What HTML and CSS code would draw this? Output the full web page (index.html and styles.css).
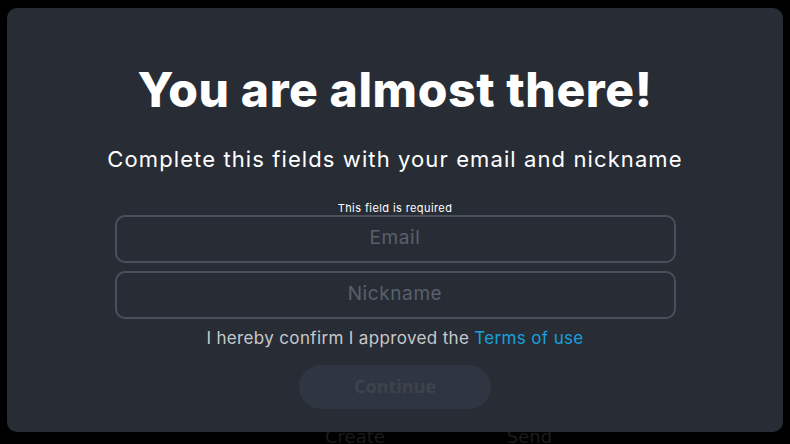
FILE: index.html
```html
<!DOCTYPE html>
<html lang="en">
<head>
<meta charset="utf-8">
<title>You are almost there!</title>
<link rel="stylesheet" href="styles.css">
</head>
<body>
<div class="page">
  <div class="page-body"></div>
  <nav class="page-nav">
    <span class="nav-item">Create</span>
    <span class="nav-item">Send</span>
  </nav>
</div>
<div class="overlay">
  <section class="modal">
    <h1 class="modal-title">You are almost there!</h1>
    <p class="modal-subtitle">Complete this fields with your email and nickname</p>
    <form class="modal-form">
      <span class="field-error">This field is required</span>
      <input class="field" type="email" placeholder="Email">
      <input class="field" type="text" placeholder="Nickname">
      <p class="terms">I hereby confirm I approved the <a class="terms-link" href="#">Terms of use</a></p>
      <button class="btn-continue" type="button" disabled>Continue</button>
    </form>
  </section>
</div>
</body>
</html>
```
FILE: styles.css
```css
* { box-sizing: border-box; }
html, body { height: 100%; }
body {
  margin: 0;
  background: #000;
  font-family: "Inter", "Liberation Sans", sans-serif;
  overflow: hidden;
}
.page {
  height: 100%;
  display: flex;
  flex-direction: column;
}
.page-body { flex: 1; }
.page-nav {
  height: 14px;
  display: flex;
  padding-left: 325px;
  gap: 122px;
  font-family: "DejaVu Sans", sans-serif;
  font-size: 18px;
  line-height: 20px;
  color: #1b1b1b;
}
.nav-item { display: block; margin-top: -3px; }
.overlay {
  position: fixed;
  inset: 0;
  padding: 8px 7px 12px 7px;
  display: flex;
}
.modal {
  flex: 1;
  background: #282d35;
  border-radius: 10px;
  display: flex;
  flex-direction: column;
  align-items: center;
  padding-top: 54px;
}
.modal-title {
  margin: 0;
  font-size: 48px;
  font-weight: 800;
  line-height: 56px;
  color: #fff;
  letter-spacing: 0.6px;
}
.modal-subtitle {
  margin: 28px 0 0 0;
  font-size: 22px;
  line-height: 26px;
  color: #fff;
  font-weight: 400;
  letter-spacing: 1.1px;
}
.modal-form {
  margin-top: 29px;
  width: 561px;
  display: flex;
  flex-direction: column;
  align-items: center;
}
.field-error {
  font-size: 11px;
  line-height: 14px;
  color: #fff;
  letter-spacing: 0.4px;
}
.field {
  width: 100%;
  height: 48px;
  padding: 0 0 4px 0;
  border: 2px solid #4a505b;
  border-radius: 10px;
  background: transparent;
  text-align: center;
  font-family: inherit;
  font-size: 19px;
  letter-spacing: 0.6px;
  color: #fff;
  outline: none;
  margin-bottom: 8px;
}
.field::placeholder { color: #59606b; }
.terms {
  margin: 0;
  font-size: 17px;
  line-height: 22px;
  color: #c6c8cb;
  letter-spacing: 0.35px;
}
.terms-link { color: #1a9fdf; text-decoration: none; }
.btn-continue {
  margin-top: 16px;
  width: 192px;
  height: 44px;
  padding: 0 0 3px 0;
  border: none;
  border-radius: 22px;
  background: #303641;
  color: #3d434d;
  font-family: "Open Sans", sans-serif;
  font-weight: 700;
  font-size: 18px;
}
```
